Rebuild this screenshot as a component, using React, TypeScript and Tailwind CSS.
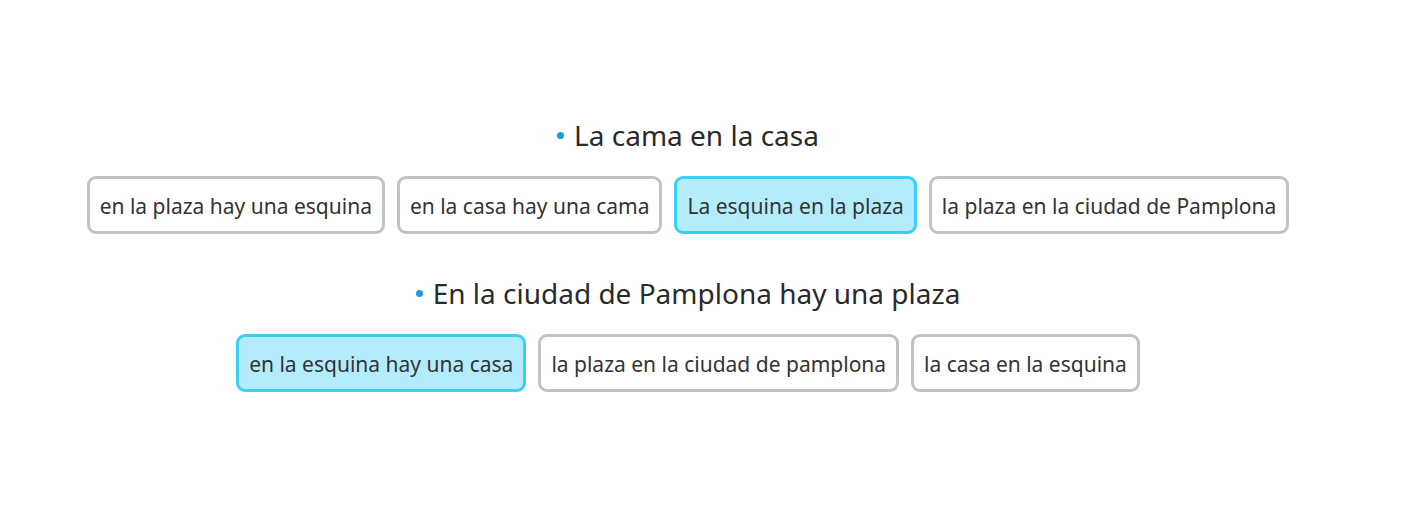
import React from 'react';

interface Group {
  title: string;
  options: { label: string; selected?: boolean }[];
}

const GROUPS: Group[] = [
  {
    title: 'La cama en la casa',
    options: [
      { label: 'en la plaza hay una esquina' },
      { label: 'en la casa hay una cama' },
      { label: 'La esquina en la plaza', selected: true },
      { label: 'la plaza en la ciudad de Pamplona' },
    ],
  },
  {
    title: 'En la ciudad de Pamplona hay una plaza',
    options: [
      { label: 'en la esquina hay una casa', selected: true },
      { label: 'la plaza en la ciudad de pamplona' },
      { label: 'la casa en la esquina' },
    ],
  },
];

const App: React.FC = () => {
  return (
    <div className="min-h-[520px] w-[1403px] bg-white font-['Noto_Sans',sans-serif] text-[#333333]">
      <div className="w-[1376px] flex flex-col items-center pt-[117px] gap-[41px]">
        {GROUPS.map((group) => (
          <div key={group.title} className="flex flex-col items-center gap-[23px]">
            {/* Heading */}
            <div className="flex items-center gap-[10px] h-9 text-[28px] leading-9 text-[#2a2a2a]">
              <span className="w-[7px] h-[7px] rounded-full bg-[#1b9bd8]" />
              <span>{group.title}</span>
            </div>

            {/* Options */}
            <div className="flex items-center gap-3">
              {group.options.map((opt) => (
                <button
                  key={opt.label}
                  className={
                    opt.selected
                      ? 'h-[58px] px-[10px] pt-[3px] rounded-[9px] border-[3px] border-[#3ccff4] bg-[#b4ecfd] text-[21px] text-[#333333]'
                      : 'h-[58px] px-[10px] pt-[3px] rounded-[9px] border-[3px] border-[#c2c2c2] bg-white text-[21px] text-[#333333]'
                  }
                >
                  {opt.label}
                </button>
              ))}
            </div>
          </div>
        ))}
      </div>
    </div>
  );
};

export default App;
